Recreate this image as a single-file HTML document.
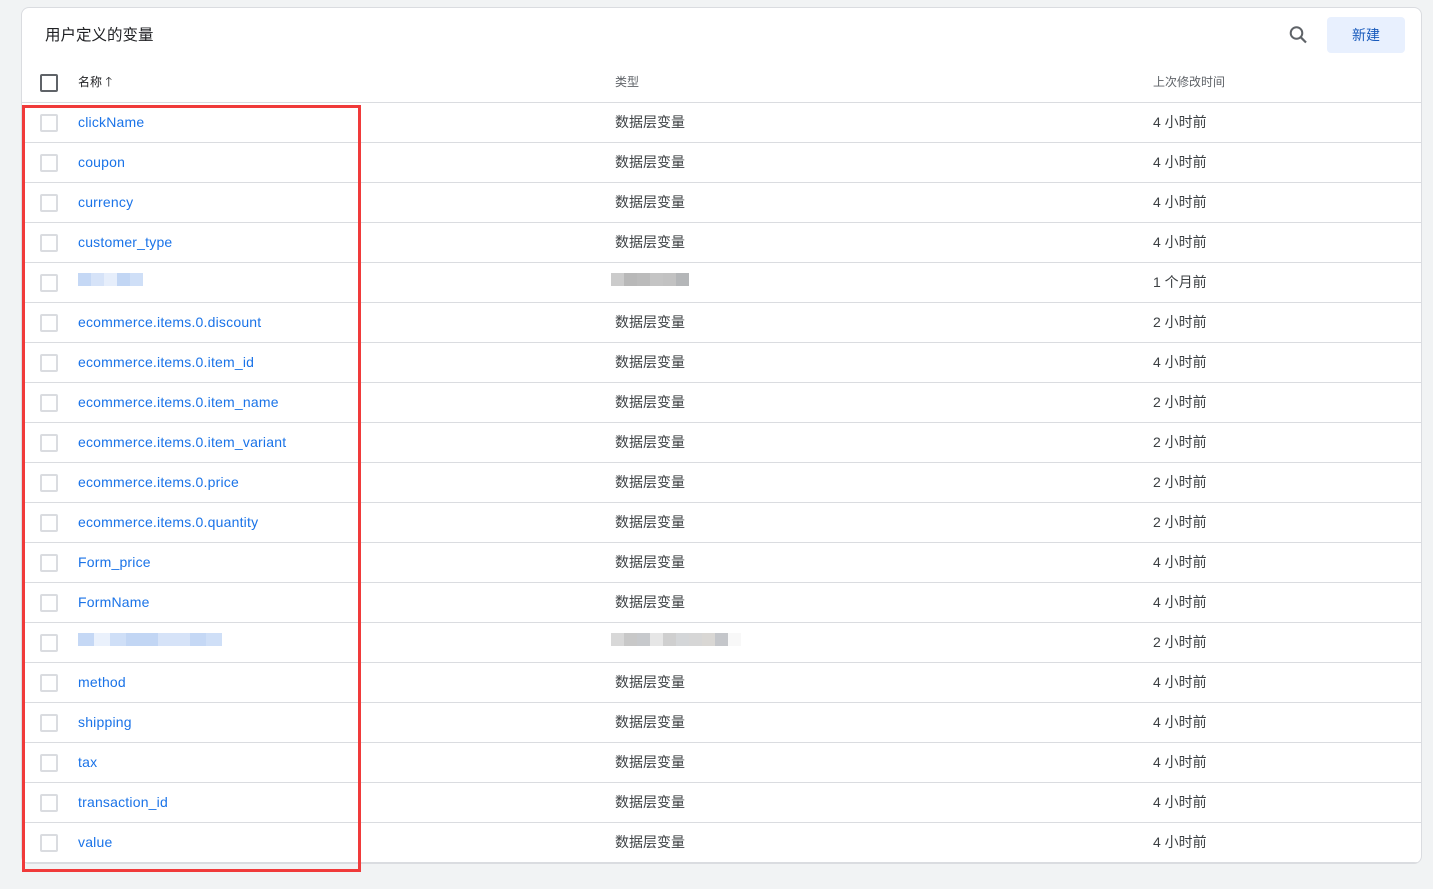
<!DOCTYPE html>
<html><head><meta charset="utf-8"><style>
*{box-sizing:border-box;margin:0;padding:0}
body{width:1433px;height:889px;background:#f1f3f4;font-family:"Liberation Sans","Noto Sans CJK SC",sans-serif;position:relative;overflow:hidden}
.card{position:absolute;left:21px;top:7px;width:1401px;height:857px;background:#fff;border:1px solid #dadce0;border-radius:8px;overflow:hidden}
.title{position:absolute;left:23px;top:15px;font-size:15.5px;color:#202124}
.btn{position:absolute;left:1305px;top:9px;width:78px;height:36px;background:#e8f0fe;border-radius:4px;font-size:14px;text-align:center;line-height:36px;color:#185abc}
.hdr{position:absolute;left:0;top:54px;width:100%;height:41px;border-bottom:1px solid #dadce0;font-size:12px;color:#5f6368;line-height:40px}
.row{position:absolute;left:0;width:100%;height:40px;border-bottom:1px solid #dadce0;font-size:14px;color:#3c4043;line-height:38px}
.cb{position:absolute;left:18px;top:11px;width:18px;height:18px;border:2px solid #dadce0;border-radius:2px}
.c1{position:absolute;left:56px;top:0;color:#1a73e8;letter-spacing:0.2px}
.c2{position:absolute;left:593px;top:0}
.c3{position:absolute;left:1131px;top:0}
.red{position:absolute;left:22px;top:105px;width:339px;height:767px;border:3px solid #f03a3a}
.blur{position:absolute;top:10px;height:13px;display:flex}
.blur span{display:block;height:13px}
</style></head><body>
<div class="card">
<div class="title">用户定义的变量</div>
<svg style="position:absolute;left:1266px;top:16px" width="22" height="22" viewBox="0 0 22 22"><circle cx="8.5" cy="9" r="5.8" fill="none" stroke="#5f6368" stroke-width="2"/><line x1="12.8" y1="13.3" x2="18" y2="18.5" stroke="#5f6368" stroke-width="2.2"/></svg>
<div class="btn">新建</div>
<div class="hdr">
<div class="cb" style="border-color:#5f6368;top:12px"></div>
<div style="position:absolute;left:56px;top:0;color:#202124">名称 <span style="font-size:13px">🡑</span></div>
<div style="position:absolute;left:593px;top:0">类型</div>
<div style="position:absolute;left:1131px;top:0">上次修改时间</div>
</div>
<div id="rows"></div>
</div>
<div class="red"></div>
<script>
var d=[["clickName","4"],["coupon","4"],["currency","4"],["customer_type","4"],[null,"1 个月前"],["ecommerce.items.0.discount","2"],["ecommerce.items.0.item_id","4"],["ecommerce.items.0.item_name","2"],["ecommerce.items.0.item_variant","2"],["ecommerce.items.0.price","2"],["ecommerce.items.0.quantity","2"],["Form_price","4"],["FormName","4"],[null,"2"],["method","4"],["shipping","4"],["tax","4"],["transaction_id","4"],["value","4"]];
var h="";
d.forEach(function(r,i){
var top=95+i*40;
var c1,c2;
if(r[0]===null){
var bl=i==4?["#c5d8f5","#d6e3f8","#e6eefb","#c2d6f4","#cfdff7"]:["#c5d8f5","#eaf1fc","#cfdff7","#c2d6f4","#c2d6f4","#d6e3f8","#d6e3f8","#c5d8f5","#cfdff7"];
var w=i==4?13:16;
c1='<div class="blur" style="left:56px">'+bl.map(function(c){return '<span style="width:'+w+'px;background:'+c+'"></span>'}).join('')+'</div>';
var gl=i==4?["#cbcbcb","#b8b8b8","#bbbbbb","#c4c4c4","#c2c2c2","#b4b6b8"]:["#d8d8d8","#c8c8c8","#c7c9cc","#e6e6e6","#cfcfcf","#d4d6d8","#d6d6d6","#d9d7d4","#c4c6ca","#f8f8f8"];
c2='<div class="blur" style="left:589px">'+gl.map(function(c){return '<span style="width:13px;background:'+c+'"></span>'}).join('')+'</div>';
}else{c1='<div class="c1">'+r[0]+'</div>';c2='<div class="c2">数据层变量</div>';}
var t=r[1].length>1?r[1]:r[1]+' 小时前';
h+='<div class="row" style="top:'+top+'px"><div class="cb"></div>'+c1+c2+'<div class="c3">'+t+'</div></div>';
});
document.getElementById("rows").innerHTML=h;
</script>
</body></html>
